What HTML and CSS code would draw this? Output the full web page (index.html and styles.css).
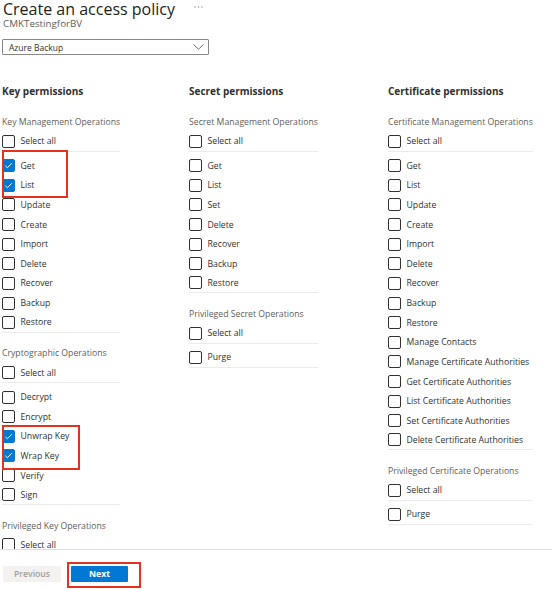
FILE: index.html
```html
<!DOCTYPE html>
<html lang="en">
<head>
  <meta charset="UTF-8">
  <meta name="viewport" content="width=device-width, initial-scale=1.0">
  <title>Create an access policy</title>
  <link rel="stylesheet" href="styles.css">
</head>
<body>
  <div class="page">
    <div class="content">
      <div class="header">
        <h1 class="title">Create an access policy</h1>
        <svg class="more" width="10" height="4" viewBox="0 0 10 4">
          <circle cx="1" cy="2" r="0.7" />
          <circle cx="4.5" cy="2" r="0.7" />
          <circle cx="8" cy="2" r="0.7" />
        </svg>
      </div>
      <div class="subtitle">CMKTestingforBV</div>

      <div class="dropdown">
        <span>Azure Backup</span>
        <svg class="chevron" width="11" height="6" viewBox="0 0 11 6">
          <polyline points="0.5,0.5 5.5,5.2 10.5,0.5" />
        </svg>
      </div>

      <div class="columns">
        <!-- Key permissions -->
        <div class="column">
          <h2>Key permissions</h2>
          <div class="group">
            <div class="group-label">Key Management Operations</div>
            <div class="row select-all"><span class="box"></span>Select all</div>
            <div class="marked marked-top">
              <div class="row"><span class="box checked"></span>Get</div>
              <div class="row"><span class="box checked"></span>List</div>
            </div>
            <div class="row"><span class="box"></span>Update</div>
            <div class="row"><span class="box"></span>Create</div>
            <div class="row"><span class="box"></span>Import</div>
            <div class="row"><span class="box"></span>Delete</div>
            <div class="row"><span class="box"></span>Recover</div>
            <div class="row"><span class="box"></span>Backup</div>
            <div class="row last"><span class="box"></span>Restore</div>
          </div>
          <div class="group">
            <div class="group-label">Cryptographic Operations</div>
            <div class="row select-all"><span class="box"></span>Select all</div>
            <div class="row"><span class="box"></span>Decrypt</div>
            <div class="row"><span class="box"></span>Encrypt</div>
            <div class="marked marked-crypto">
              <div class="row"><span class="box checked"></span>Unwrap Key</div>
              <div class="row"><span class="box checked"></span>Wrap Key</div>
            </div>
            <div class="row"><span class="box"></span>Verify</div>
            <div class="row last"><span class="box"></span>Sign</div>
          </div>
          <div class="group">
            <div class="group-label">Privileged Key Operations</div>
            <div class="row select-all"><span class="box"></span>Select all</div>
            <div class="row last"><span class="box"></span>Release</div>
          </div>
        </div>

        <!-- Secret permissions -->
        <div class="column">
          <h2>Secret permissions</h2>
          <div class="group">
            <div class="group-label">Secret Management Operations</div>
            <div class="row select-all"><span class="box"></span>Select all</div>
            <div class="row"><span class="box"></span>Get</div>
            <div class="row"><span class="box"></span>List</div>
            <div class="row"><span class="box"></span>Set</div>
            <div class="row"><span class="box"></span>Delete</div>
            <div class="row"><span class="box"></span>Recover</div>
            <div class="row"><span class="box"></span>Backup</div>
            <div class="row last"><span class="box"></span>Restore</div>
          </div>
          <div class="group">
            <div class="group-label">Privileged Secret Operations</div>
            <div class="row select-all"><span class="box"></span>Select all</div>
            <div class="row last"><span class="box"></span>Purge</div>
          </div>
        </div>

        <!-- Certificate permissions -->
        <div class="column">
          <h2>Certificate permissions</h2>
          <div class="group">
            <div class="group-label">Certificate Management Operations</div>
            <div class="row select-all"><span class="box"></span>Select all</div>
            <div class="row"><span class="box"></span>Get</div>
            <div class="row"><span class="box"></span>List</div>
            <div class="row"><span class="box"></span>Update</div>
            <div class="row"><span class="box"></span>Create</div>
            <div class="row"><span class="box"></span>Import</div>
            <div class="row"><span class="box"></span>Delete</div>
            <div class="row"><span class="box"></span>Recover</div>
            <div class="row"><span class="box"></span>Backup</div>
            <div class="row"><span class="box"></span>Restore</div>
            <div class="row"><span class="box"></span>Manage Contacts</div>
            <div class="row"><span class="box"></span>Manage Certificate Authorities</div>
            <div class="row"><span class="box"></span>Get Certificate Authorities</div>
            <div class="row"><span class="box"></span>List Certificate Authorities</div>
            <div class="row"><span class="box"></span>Set Certificate Authorities</div>
            <div class="row last"><span class="box"></span>Delete Certificate Authorities</div>
          </div>
          <div class="group">
            <div class="group-label">Privileged Certificate Operations</div>
            <div class="row select-all"><span class="box"></span>Select all</div>
            <div class="row last"><span class="box"></span>Purge</div>
          </div>
        </div>
      </div>
    </div>

    <div class="footer">
      <button class="btn btn-prev" disabled>Previous</button>
      <span class="marked marked-next">
        <button class="btn btn-next">Next</button>
      </span>
    </div>
  </div>
</body>
</html>
```

FILE: styles.css
```css
* {
  margin: 0;
  padding: 0;
  box-sizing: border-box;
}

body {
  font-family: "Segoe UI", "Open Sans", sans-serif;
  background: #ffffff;
  color: #323130;
}

.page {
  width: 552px;
  height: 589px;
  display: flex;
  flex-direction: column;
  overflow: hidden;
}

.content {
  flex: 1;
  overflow: hidden;
  min-height: 0;
}

/* header */

.header {
  display: flex;
  align-items: flex-start;
  padding-left: 3px;
}

.title {
  font-size: 16px;
  font-weight: 400;
  line-height: 18px;
  color: #201f1e;
}

.more {
  margin-left: 19px;
  margin-top: 5px;
  fill: #8a8886;
}

.subtitle {
  padding-left: 3px;
  font-size: 9.8px;
  line-height: 11px;
  color: #605e5c;
}

.dropdown {
  display: flex;
  align-items: center;
  justify-content: space-between;
  width: 207px;
  height: 16px;
  margin: 10px 0 0 2px;
  padding: 0 4px 0 6px;
  border: 1px solid #8a8886;
  border-radius: 1px;
  font-size: 8.5px;
  color: #323130;
}

.chevron {
  fill: none;
  stroke: #605e5c;
  stroke-width: 0.9;
}

/* permission columns */

.columns {
  display: grid;
  grid-template-columns: 187px 199px auto;
  padding-left: 2px;
  margin-top: 29.4px;
  align-items: start;
}

.column {
  width: max-content;
}

.column h2 {
  font-size: 10px;
  font-weight: 700;
  line-height: 14px;
  margin-bottom: 14.5px;
  color: #323130;
}

.group {
  margin-bottom: 11.7px;
}

.group-label {
  font-size: 8.7px;
  line-height: 19px;
  color: #605e5c;
}

.row {
  display: flex;
  align-items: center;
  height: 19.64px;
  font-size: 8.7px;
  color: #323130;
}

.row.select-all {
  border-bottom: 1px solid #edebe9;
  margin-bottom: 4.4px;
}

.row.last {
  border-bottom: 1px solid #edebe9;
}

.box {
  flex: none;
  width: 13px;
  height: 13px;
  margin-right: 5.5px;
  border: 1px solid #323130;
  border-radius: 2px;
  background: #ffffff;
}

.box.checked {
  border-color: #0078d4;
  background: #0078d4 url("data:image/svg+xml,%3Csvg xmlns='http://www.w3.org/2000/svg' viewBox='0 0 11 11'%3E%3Cpolyline points='2.4,5.8 4.4,7.7 8.8,3.3' fill='none' stroke='white' stroke-width='1'/%3E%3C/svg%3E") center / 11px 11px no-repeat;
}

/* red annotation frames */

.marked {
  position: relative;
}

.marked::after {
  content: "";
  position: absolute;
  border: 2px solid #e5321f;
  pointer-events: none;
}

.marked-top::after {
  left: 0;
  top: -6px;
  width: 62px;
  height: 44px;
}

.marked-crypto::after {
  left: 0;
  top: -1px;
  width: 74px;
  height: 41px;
}

/* footer */

.footer {
  flex: none;
  height: 40px;
  border-top: 1px solid #e1dfdd;
  display: flex;
  align-items: flex-start;
  gap: 10px;
  padding: 16px 0 0 3px;
}

.btn {
  height: 16px;
  padding: 0;
  border: none;
  border-radius: 1px;
  font-family: inherit;
  font-size: 8.7px;
  line-height: 16px;
  font-weight: 600;
}

.btn-prev {
  width: 58px;
  background: #f3f2f1;
  color: #a19f9d;
}

.btn-next {
  width: 57px;
  background: #0078d4;
  color: #ffffff;
  font-weight: 700;
}

.marked-next {
  display: inline-flex;
}

.marked-next::after {
  left: -4px;
  top: -4px;
  width: 70px;
  height: 22px;
}
```
